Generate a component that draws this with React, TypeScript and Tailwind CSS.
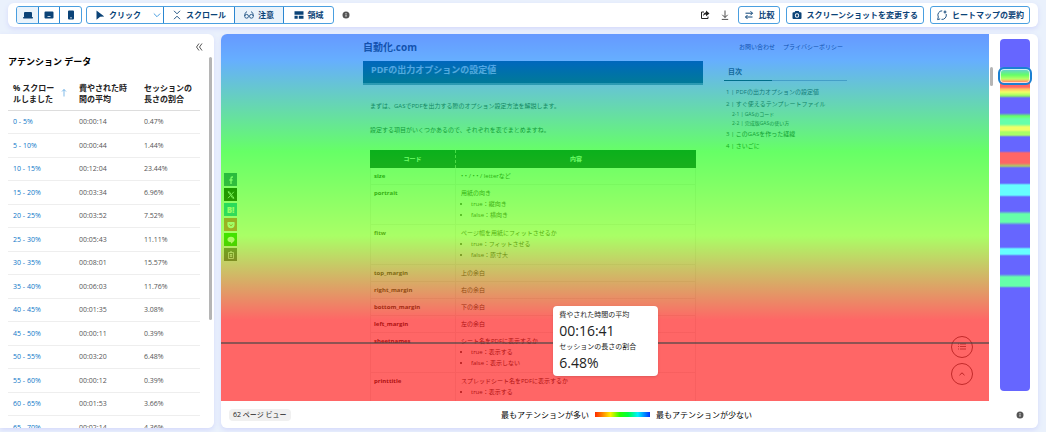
import { ReactNode } from 'react';
import { clsx } from 'clsx';

interface AttentionRow {
  range: string;
  time: string;
  share: string;
}

const attentionRows: AttentionRow[] = [
  { range: '0 - 5%', time: '00:00:14', share: '0.47%' },
  { range: '5 - 10%', time: '00:00:44', share: '1.44%' },
  { range: '10 - 15%', time: '00:12:04', share: '23.44%' },
  { range: '15 - 20%', time: '00:03:34', share: '6.96%' },
  { range: '20 - 25%', time: '00:03:52', share: '7.52%' },
  { range: '25 - 30%', time: '00:05:43', share: '11.11%' },
  { range: '30 - 35%', time: '00:08:01', share: '15.57%' },
  { range: '35 - 40%', time: '00:06:03', share: '11.76%' },
  { range: '40 - 45%', time: '00:01:35', share: '3.08%' },
  { range: '45 - 50%', time: '00:00:11', share: '0.39%' },
  { range: '50 - 55%', time: '00:03:20', share: '6.48%' },
  { range: '55 - 60%', time: '00:00:12', share: '0.39%' },
  { range: '60 - 65%', time: '00:01:53', share: '3.66%' },
  { range: '65 - 70%', time: '00:02:14', share: '4.36%' },
];

interface OptionRow {
  code: string;
  text: string;
  items?: string[];
}

const optionRows: OptionRow[] = [
  { code: 'size', text: '• • / • • / letterなど' },
  {
    code: 'portrait',
    text: '用紙の向き',
    items: ['true：縦向き', 'false：横向き'],
  },
  {
    code: 'fitw',
    text: 'ページ幅を用紙にフィットさせるか',
    items: ['true：フィットさせる', 'false：原寸大'],
  },
  { code: 'top_margin', text: '上の余白' },
  { code: 'right_margin', text: '右の余白' },
  { code: 'bottom_margin', text: '下の余白' },
  { code: 'left_margin', text: '左の余白' },
  {
    code: 'sheetnames',
    text: 'シート名をPDFに表示するか',
    items: ['true：表示する', 'false：表示しない'],
  },
  {
    code: 'printtitle',
    text: 'スプレッドシート名をPDFに表示するか',
    items: ['true：表示する'],
  },
];

const tocItems = [
  { no: '1', label: 'PDFの出力オプションの設定値' },
  { no: '2', label: 'すぐ使えるテンプレートファイル' },
  { no: '2-1', label: 'GASのコード', sub: true },
  { no: '2-2', label: '完成版GASの使い方', sub: true },
  { no: '3', label: 'このGASを作った経緯' },
  { no: '4', label: 'さいごに' },
];

const BLUE = '#6666ff';
const GREEN = '#66ff66';
const MINT = '#66ffaa';
const CYAN = '#66ffff';
const YELLOW = '#f0ff66';
const RED = '#ff6666';

// [offset, color] along the page, total length is STRIP_LENGTH
const STRIP_LENGTH = 352;
const stripStops: [number, string][] = [
  [0, BLUE], [28, BLUE], [30, '#66ccdd'], [36, GREEN], [40, '#bbff66'],
  [42, '#ffaa66'], [44, RED], [48, RED], [50, '#ffbb66'], [53, YELLOW],
  [56, '#aaff66'], [57, '#88ee66'], [59, BLUE], [74, BLUE], [77, GREEN],
  [80, MINT], [85, MINT], [88, YELLOW], [91, YELLOW], [93, '#aaff66'],
  [96, '#aaff66'], [98, BLUE], [112, BLUE], [114, RED], [124, RED],
  [127, '#aacc66'], [129, BLUE], [144, BLUE], [146, CYAN], [156, CYAN],
  [158, BLUE], [172, BLUE], [175, MINT], [183, MINT], [186, BLUE],
  [208, BLUE], [210, CYAN], [215, CYAN], [217, BLUE], [235, BLUE],
  [238, MINT], [247, MINT], [249, BLUE], [STRIP_LENGTH, BLUE],
];

const stripGradient = `linear-gradient(to bottom, ${stripStops
  .map(([offset, color]) => `${color} ${(offset / STRIP_LENGTH) * 100}%`)
  .join(', ')})`;

const LaptopIcon = () => (
  <svg className="h-3 w-3" viewBox="0 0 12 12" fill="currentColor">
    <rect x="2" y="3" width="8" height="5.5" rx="1" />
    <rect x="1" y="8" width="10" height="1.4" rx=".7" />
  </svg>
);

const TabletIcon = () => (
  <svg className="h-3 w-3" viewBox="0 0 12 12" fill="currentColor">
    <path
      fillRule="evenodd"
      d="M2.5 2.5h7a1 1 0 0 1 1 1v5a1 1 0 0 1-1 1h-7a1 1 0 0 1-1-1v-5a1 1 0 0 1 1-1zM4.5 7.2v.8h3v-.8z"
    />
  </svg>
);

const PhoneIcon = () => (
  <svg className="h-3 w-3" viewBox="0 0 12 12" fill="currentColor">
    <path
      fillRule="evenodd"
      d="M4 1.5h4a1 1 0 0 1 1 1v7a1 1 0 0 1-1 1H4a1 1 0 0 1-1-1v-7a1 1 0 0 1 1-1zM5 8.6v.7h2v-.7z"
    />
  </svg>
);

const CursorIcon = () => (
  <svg className="h-2.5 w-2.5" viewBox="0 0 10 10" fill="currentColor">
    <path d="M1.5.5 9.3 6.4 5.2 6.8 1.5 9.7z" />
  </svg>
);

const ScrollIcon = () => (
  <svg
    className="h-2.5 w-2.5"
    viewBox="0 0 10 10"
    fill="none"
    stroke="currentColor"
    strokeWidth=".9">
    <path d="M2 .8 5 3.8 8 .8M2 9.2 5 6.2 8 9.2" />
  </svg>
);

const AttentionIcon = () => (
  <svg
    className="h-2.5 w-2.5"
    viewBox="0 0 10 10"
    fill="none"
    stroke="currentColor"
    strokeWidth=".8">
    <circle cx="2.6" cy="6.3" r="1.9" />
    <circle cx="7.4" cy="6.3" r="1.9" />
    <path d="M.7 6C.7 3.6 1.5 2 3 1.7M9.3 6C9.3 3.6 8.5 2 7 1.7" />
  </svg>
);

const AreaIcon = () => (
  <svg className="h-2.5 w-2.5" viewBox="0 0 10 10" fill="currentColor">
    <path d="M.5 1.2h9v3.6h-9zM.5 5.7h3.2v3H.5zM4.8 5.7h4.7v3H4.8z" />
  </svg>
);

const CompareIcon = () => (
  <svg
    className="h-2.5 w-2.5"
    viewBox="0 0 10 10"
    fill="none"
    stroke="currentColor"
    strokeWidth="1">
    <path d="M1.5 3.2h7M6.5 1.2l2 2-2 2M8.5 7h-7M3.5 5l-2 2 2 2" />
  </svg>
);

const CameraIcon = () => (
  <svg className="h-2.5 w-2.5" viewBox="0 0 10 10" fill="currentColor">
    <path
      fillRule="evenodd"
      d="M3.3 1h3.4l.7 1.2h1.1a1 1 0 0 1 1 1V8a1 1 0 0 1-1 1h-7a1 1 0 0 1-1-1V3.2a1 1 0 0 1 1-1h1.1zM5 3.3a2.2 2.2 0 1 0 0 4.400 2.2 2.2 0 0 0 0-4.400zM5 4.200a1.300 1.300 0 1 1 0 2.600 1.300 1.300 0 0 1 0-2.600z"
    />
  </svg>
);

const SummaryIcon = () => (
  <svg
    className="h-3 w-3"
    viewBox="0 0 12 12"
    fill="none"
    stroke="currentColor"
    strokeWidth=".9">
    <path d="M6.2 1.8A4.3 4.3 0 0 0 2.3 8L1.6 10.6l2.6-.7M5.5 10.4A4.3 4.3 0 0 0 10.2 5" />
    <path d="M9 .8l.6 1.6 1.6.6-1.6.6L9 5.2l-.6-1.6L6.8 3l1.6-.6z" fill="currentColor" stroke="none" />
  </svg>
);

const ShareIcon = () => (
  <svg
    className="h-2.5 w-2.5"
    viewBox="0 0 10 10"
    fill="none"
    stroke="currentColor"
    strokeWidth="1">
    <path d="M4 2H1.5v6.5h6.5V6.5" />
    <path d="M6 .6 9.5 3.5 6 6.2V4.6C4.5 4.6 3.7 5.2 3 6.4 3.2 4 4.2 2.5 6 2.3z" fill="currentColor" stroke="none" />
  </svg>
);

const DownloadIcon = () => (
  <svg
    className="h-2.5 w-2.5"
    viewBox="0 0 10 10"
    fill="none"
    stroke="currentColor"
    strokeWidth=".8">
    <path d="M5 .5v7M2.3 4.8 5 7.5l2.7-2.7M1.8 9.4h6.4" />
  </svg>
);

const InfoIcon = () => (
  <svg className="h-2 w-2 text-[#555]" viewBox="0 0 8 8">
    <circle cx="4" cy="4" r="3.5" fill="currentColor" />
    <path d="M4 3.5v2.2M4 2v.9" stroke="#fff" strokeWidth=".9" />
  </svg>
);

const ToolButton = ({
  children,
  className,
  pressed,
}: {
  children: ReactNode;
  className?: string;
  pressed?: boolean;
}) => (
  <button
    type="button"
    aria-pressed={pressed}
    className={clsx(
      'flex h-4 items-center justify-center whitespace-nowrap',
      pressed && 'bg-[#eaf3fb]',
      className
    )}>
    {children}
  </button>
);

const ActionButton = ({
  children,
  icon,
}: {
  children: ReactNode;
  icon: ReactNode;
}) => (
  <button
    type="button"
    className="flex h-[18px] items-center gap-1 whitespace-nowrap rounded-[3px] border border-[#4a9fe0] px-[5px]">
    {icon}
    {children}
  </button>
);

const Toolbar = () => (
  <header className="mx-2 mt-[3px] flex h-6 shrink-0 items-center rounded-md bg-white px-2 text-[8px] font-bold text-[#0b4377] shadow-[0_2px_5px_#d5d9fb]">
    <div className="flex divide-x divide-[#2a86d1] overflow-hidden rounded-[3px] border border-[#4a9fe0]">
      <button type="button" aria-label="PC" className="flex h-4 w-[22px] items-center justify-center bg-[#eaf3fb]">
        <LaptopIcon />
      </button>
      <button type="button" aria-label="タブレット" className="flex h-4 w-[21px] items-center justify-center">
        <TabletIcon />
      </button>
      <button type="button" aria-label="モバイル" className="flex h-4 w-[21px] items-center justify-center">
        <PhoneIcon />
      </button>
    </div>
    <div className="ml-1 flex divide-x divide-[#2a86d1] overflow-hidden rounded-[3px] border border-[#4a9fe0]">
      <ToolButton className="w-[77px] gap-1 pl-1.5">
        <CursorIcon />
        クリック
        <svg className="ml-2 h-2 w-2 text-[#4a9fe0]" viewBox="0 0 8 8" fill="none" stroke="currentColor">
          <path d="M.8 2.500 4 5.700l3.200-3.200" />
        </svg>
      </ToolButton>
      <ToolButton className="w-[71px] gap-1">
        <ScrollIcon />
        スクロール
      </ToolButton>
      <ToolButton className="w-[49px] gap-1" pressed>
        <AttentionIcon />
        注意
      </ToolButton>
      <ToolButton className="w-[49px] gap-1">
        <AreaIcon />
        領域
      </ToolButton>
    </div>
    <button type="button" aria-label="情報" className="ml-2">
      <InfoIcon />
    </button>
    <div className="ml-auto flex items-center gap-1.5">
      <button type="button" aria-label="共有" className="mr-1 text-[#222]">
        <ShareIcon />
      </button>
      <button type="button" aria-label="ダウンロード" className="mr-0.5 text-[#222]">
        <DownloadIcon />
      </button>
      <ActionButton icon={<CompareIcon />}>比較</ActionButton>
      <ActionButton icon={<CameraIcon />}>スクリーンショットを変更する</ActionButton>
      <ActionButton icon={<SummaryIcon />}>ヒートマップの要約</ActionButton>
    </div>
  </header>
);

const AttentionPanel = () => (
  <aside className="relative w-[214px] shrink-0 overflow-hidden rounded-r-md bg-white pl-2 pr-3.5">
    <div className="-mr-1 flex h-[22px] items-end justify-end">
      <button type="button" aria-label="折りたたむ" className="mb-1 text-[#444]">
        <svg className="h-2.5 w-2.5" viewBox="0 0 10 10" fill="none" stroke="currentColor" strokeWidth=".9">
          <path d="M5 1.500 2.500 5 5 8.500M8 1.500 5.500 5 8 8.500" />
        </svg>
      </button>
    </div>
    <h2 className="text-[9px] font-bold leading-3 text-black">
      アテンション データ
    </h2>
    <table className="mt-3.5 w-full table-fixed border-separate border-spacing-0 text-left">
      <thead className="text-[8px] leading-[11px] text-[#222]">
        <tr className="[&>th]:border-b [&>th]:border-[#ddd] [&>th]:pb-1.5 [&>th]:font-bold">
          <th className="w-[71px] pl-[5px]">
            <button type="button" className="flex w-full items-center justify-between pr-3 text-left">
              <span>
                % スクロー
                <br />
                ルしました
              </span>
              <svg className="h-2 w-1.5 text-[#4a9fe0]" viewBox="0 0 6 8" fill="none" stroke="currentColor" strokeWidth=".7">
                <path d="M3 7.500v-7M1 2.500l2-2 2 2" />
              </svg>
            </button>
          </th>
          <th className="w-[65px]">
            費やされた時
            <br />
            間の平均
          </th>
          <th>
            セッションの
            <br />
            長さの割合
          </th>
        </tr>
      </thead>
      <tbody className="text-[7px] leading-3 text-[#555]">
        {attentionRows.map((row) => (
          <tr
            key={row.range}
            className="odd:h-[23px] even:h-6 [&>td]:border-b [&>td]:border-[#eee]">
            <td className="pl-[5px] text-[#0f78c8]">{row.range}</td>
            <td>{row.time}</td>
            <td>{row.share}</td>
          </tr>
        ))}
      </tbody>
    </table>
    <div className="absolute right-0.5 top-[23px] h-2/3 w-[3px] rounded-full bg-[#b5b5b5]" />
  </aside>
);

const SocialButtons = () => (
  <div className="absolute left-[3px] top-[139px] flex flex-col gap-0.5 text-white [&>a]:flex [&>a]:h-[13px] [&>a]:w-[13px] [&>a]:items-center [&>a]:justify-center [&_svg]:h-2 [&_svg]:w-2">
    <a href="#facebook" aria-label="Facebook" className="bg-[#3b5998]">
      <svg viewBox="0 0 8 8" fill="none" stroke="currentColor" strokeWidth="1.3">
        <path d="M6 1H5.2C4.3 1 4 1.5 4 2.3V8M2.4 4h3.2" />
      </svg>
    </a>
    <a href="#x" aria-label="X" className="bg-black">
      <svg viewBox="0 0 8 8" fill="none" stroke="currentColor" strokeWidth=".8">
        <path d="M1 .8h1.3L7 7.2H5.7zM6.8.8 4.5 3.5M3.4 4.6 1 7.2" />
      </svg>
    </a>
    <a href="#hatena" aria-label="はてなブックマーク" className="bg-[#00a4de] text-[8px] font-extrabold">
      B!
    </a>
    <a href="#pocket" aria-label="Pocket" className="bg-[#ef3f56]">
      <svg viewBox="0 0 8 8">
        <path d="M1 1h6a.6.6 0 0 1 .6.6v2a3.6 3.6 0 0 1-7.2 0v-2A.6.6 0 0 1 1 1z" fill="currentColor" />
        <path d="M2.3 3.2 4 4.8l1.7-1.6" fill="none" stroke="#ef3f56" />
      </svg>
    </a>
    <a href="#line" aria-label="LINE" className="bg-[#00b900]">
      <svg viewBox="0 0 8 8" fill="currentColor">
        <path d="M4 .8c2 0 3.6 1.2 3.6 2.8S5.5 6.6 4 7.7V6.3C2 6.3.4 5.2.4 3.600S2 .8 4 .8z" />
      </svg>
    </a>
    <a href="#copy" aria-label="コピー" className="bg-[#555]">
      <svg viewBox="0 0 8 8" fill="none" stroke="currentColor" strokeWidth=".8">
        <path d="M1.5 1.5h5v6h-5zM3 .8h2M2.8 3.500h2.400M2.800 5.300h2.400M4 3v3" />
      </svg>
    </a>
  </div>
);

const FloatingButtons = () => (
  <div className="absolute bottom-4 right-4 flex flex-col gap-[5px] text-[#555] [&>button]:flex [&>button]:h-[22px] [&>button]:w-[22px] [&>button]:items-center [&>button]:justify-center [&>button]:rounded-full [&>button]:border [&>button]:border-[#666]">
    <button type="button" aria-label="目次">
      <svg className="h-2.5 w-2.5" viewBox="0 0 10 10" fill="none" stroke="currentColor" strokeWidth=".8">
        <path d="M1 2h1M3 2h6M1 4.500h1M3 4.500h6M1 7h1M3 7h6" />
      </svg>
    </button>
    <button type="button" aria-label="トップへ">
      <svg className="h-2 w-2" viewBox="0 0 8 8" fill="none" stroke="currentColor">
        <path d="M1.500 5.200 4 2.800l2.500 2.400" />
      </svg>
    </button>
  </div>
);

const OptionTable = () => (
  <table className="w-full border-separate border-spacing-0 text-left text-[6px] leading-[11px] text-[#333]">
    <thead className="bg-[#1e3a46] text-center text-white">
      <tr className="h-[18px]">
        <th className="w-[86px] border-r border-dashed border-[#aaa] font-bold">コード</th>
        <th className="font-bold">内容</th>
      </tr>
    </thead>
    <tbody>
      {optionRows.map((row) => (
        <tr
          key={row.code}
          className="align-top [&>td]:border-b [&>td]:border-r [&>td]:border-[#eee] [&>td]:pb-0.5 [&>td]:pt-[3px]">
          <td className="border-l pl-[3px] font-bold">{row.code}</td>
          <td className="pl-[5px]">
            {row.text}
            {row.items && (
              <ul className="list-disc pb-px pl-2.5">
                {row.items.map((item) => (
                  <li key={item}>{item}</li>
                ))}
              </ul>
            )}
          </td>
        </tr>
      ))}
    </tbody>
  </table>
);

const CapturedPage = () => (
  <div className="mx-auto w-full max-w-[484px] text-[#333]">
    <div className="flex h-[27px] items-center justify-between pr-1">
      <p className="text-[10px] font-bold">自動化.com</p>
      <nav className="flex gap-2 text-[6px]">
        <a href="#contact">お問い合わせ</a>
        <a href="#privacy">プライバシーポリシー</a>
      </nav>
    </div>
    <div className="flex gap-[21px]">
      <article className="flex-1">
        <h1 className="h-6 border-b-2 border-[#6b98a4] bg-[#004a60] px-2 text-[9px] font-bold leading-[18px] text-white/80">
          PDFの出力オプションの設定値
        </h1>
        <div className="px-[7px] text-[6px] leading-3">
          <p className="mt-[15px]">
            まずは、GASでPDFを出力する際のオプション設定方法を解説します。
          </p>
          <p className="mb-3.5 mt-3">
            設定する項目がいくつかあるので、それぞれを表でまとめますね。
          </p>
          <OptionTable />
        </div>
      </article>
      <div className="w-[123px] text-[6px] leading-3">
        <h2 className="mt-1 flex h-4 items-center border-b border-[#aac] pb-0.5 pl-1 text-[7px] font-bold">
          目次
        </h2>
        <div className="-mt-px h-px w-12 bg-[#033]" />
        <ol className="mt-[5px]">
          {tocItems.map((item) => (
            <li
              key={item.no}
              className={clsx(
                'whitespace-nowrap',
                item.sub ? 'pl-2 text-[5px] leading-[9px]' : 'pl-0.5'
              )}>
              <a href={`#section-${item.no}`}>
                {item.no} | {item.label}
              </a>
            </li>
          ))}
        </ol>
      </div>
    </div>
  </div>
);

const HeatmapView = () => (
  <div className="relative min-w-0 flex-1 overflow-hidden rounded-tl-md bg-white">
    <CapturedPage />
    <SocialButtons />
    <FloatingButtons />
    <div className="pointer-events-none absolute inset-0 bg-[linear-gradient(to_bottom,#0055ff_0%,#0078ff_7%,#00ff00_32%,#70ff00_55%,#ff0000_78%)] opacity-60" />
    <div className="absolute inset-x-0 top-[84%] h-0.5 bg-[#444]/60" />
    <div className="absolute left-[43%] top-[74%] ml-0.5 w-[105px] rounded-sm bg-white px-1.5 py-[3px] text-[#222] shadow">
      <p className="text-[7px] leading-3">費やされた時間の平均</p>
      <p className="text-[14px] font-medium leading-5">00:16:41</p>
      <p className="text-[7px] leading-3">セッションの長さの割合</p>
      <p className="text-[14px] font-medium leading-5">6.48%</p>
    </div>
  </div>
);

const PageStrip = () => (
  <div className="relative flex w-[49px] shrink-0 rounded-tr-md bg-white pb-2.5 pl-[11px] pr-2 pt-[5px]">
    <div className="flex-1 rounded" style={{ background: stripGradient }} />
    <div className="absolute left-px top-[33px] h-[19px] w-[3px] rounded-full bg-[#b5b5b5]" />
    <div className="absolute left-[9px] right-1.5 top-[33px] h-[18px] rounded-md border-2 border-[#1b80d2] ring-1 ring-inset ring-white/70" />
  </div>
);

const Legend = () => (
  <footer className="grid h-[27px] shrink-0 grid-cols-[1fr_auto_1fr] items-center rounded-b-md bg-white pl-2 pr-3.5">
    <span className="justify-self-start rounded-sm bg-[#f0f0f0] px-1 text-[7px] leading-3 text-[#222]">
      62 ページ ビュー
    </span>
    <div className="flex items-center gap-1.5 text-[8px] text-black">
      最もアテンションが多い
      <div className="h-[5px] w-[55px] bg-[linear-gradient(to_right,#ff2a00,#ff7a00_12%,#fff000_28%,#2bff00_45%,#00ff40_60%,#00f0ff_78%,#0033ff)]" />
      最もアテンションが少ない
    </div>
    <button type="button" aria-label="情報" className="justify-self-end">
      <InfoIcon />
    </button>
  </footer>
);

export default function App() {
  return (
    <div className="flex h-screen flex-col overflow-hidden bg-[#eaf1fc] font-['Open_Sans','Noto_Sans_CJK_JP',sans-serif]">
      <Toolbar />
      <main className="mb-1 mt-[7px] flex min-h-0 flex-1 gap-[7px] pr-2">
        <div className="flex rounded-r-md shadow-[0_2px_5px_#d5d9fb]">
          <AttentionPanel />
        </div>
        <section className="flex min-w-0 flex-1 flex-col rounded-md shadow-[0_2px_5px_#d5d9fb]">
          <div className="flex min-h-0 flex-1">
            <HeatmapView />
            <PageStrip />
          </div>
          <Legend />
        </section>
      </main>
    </div>
  );
}
